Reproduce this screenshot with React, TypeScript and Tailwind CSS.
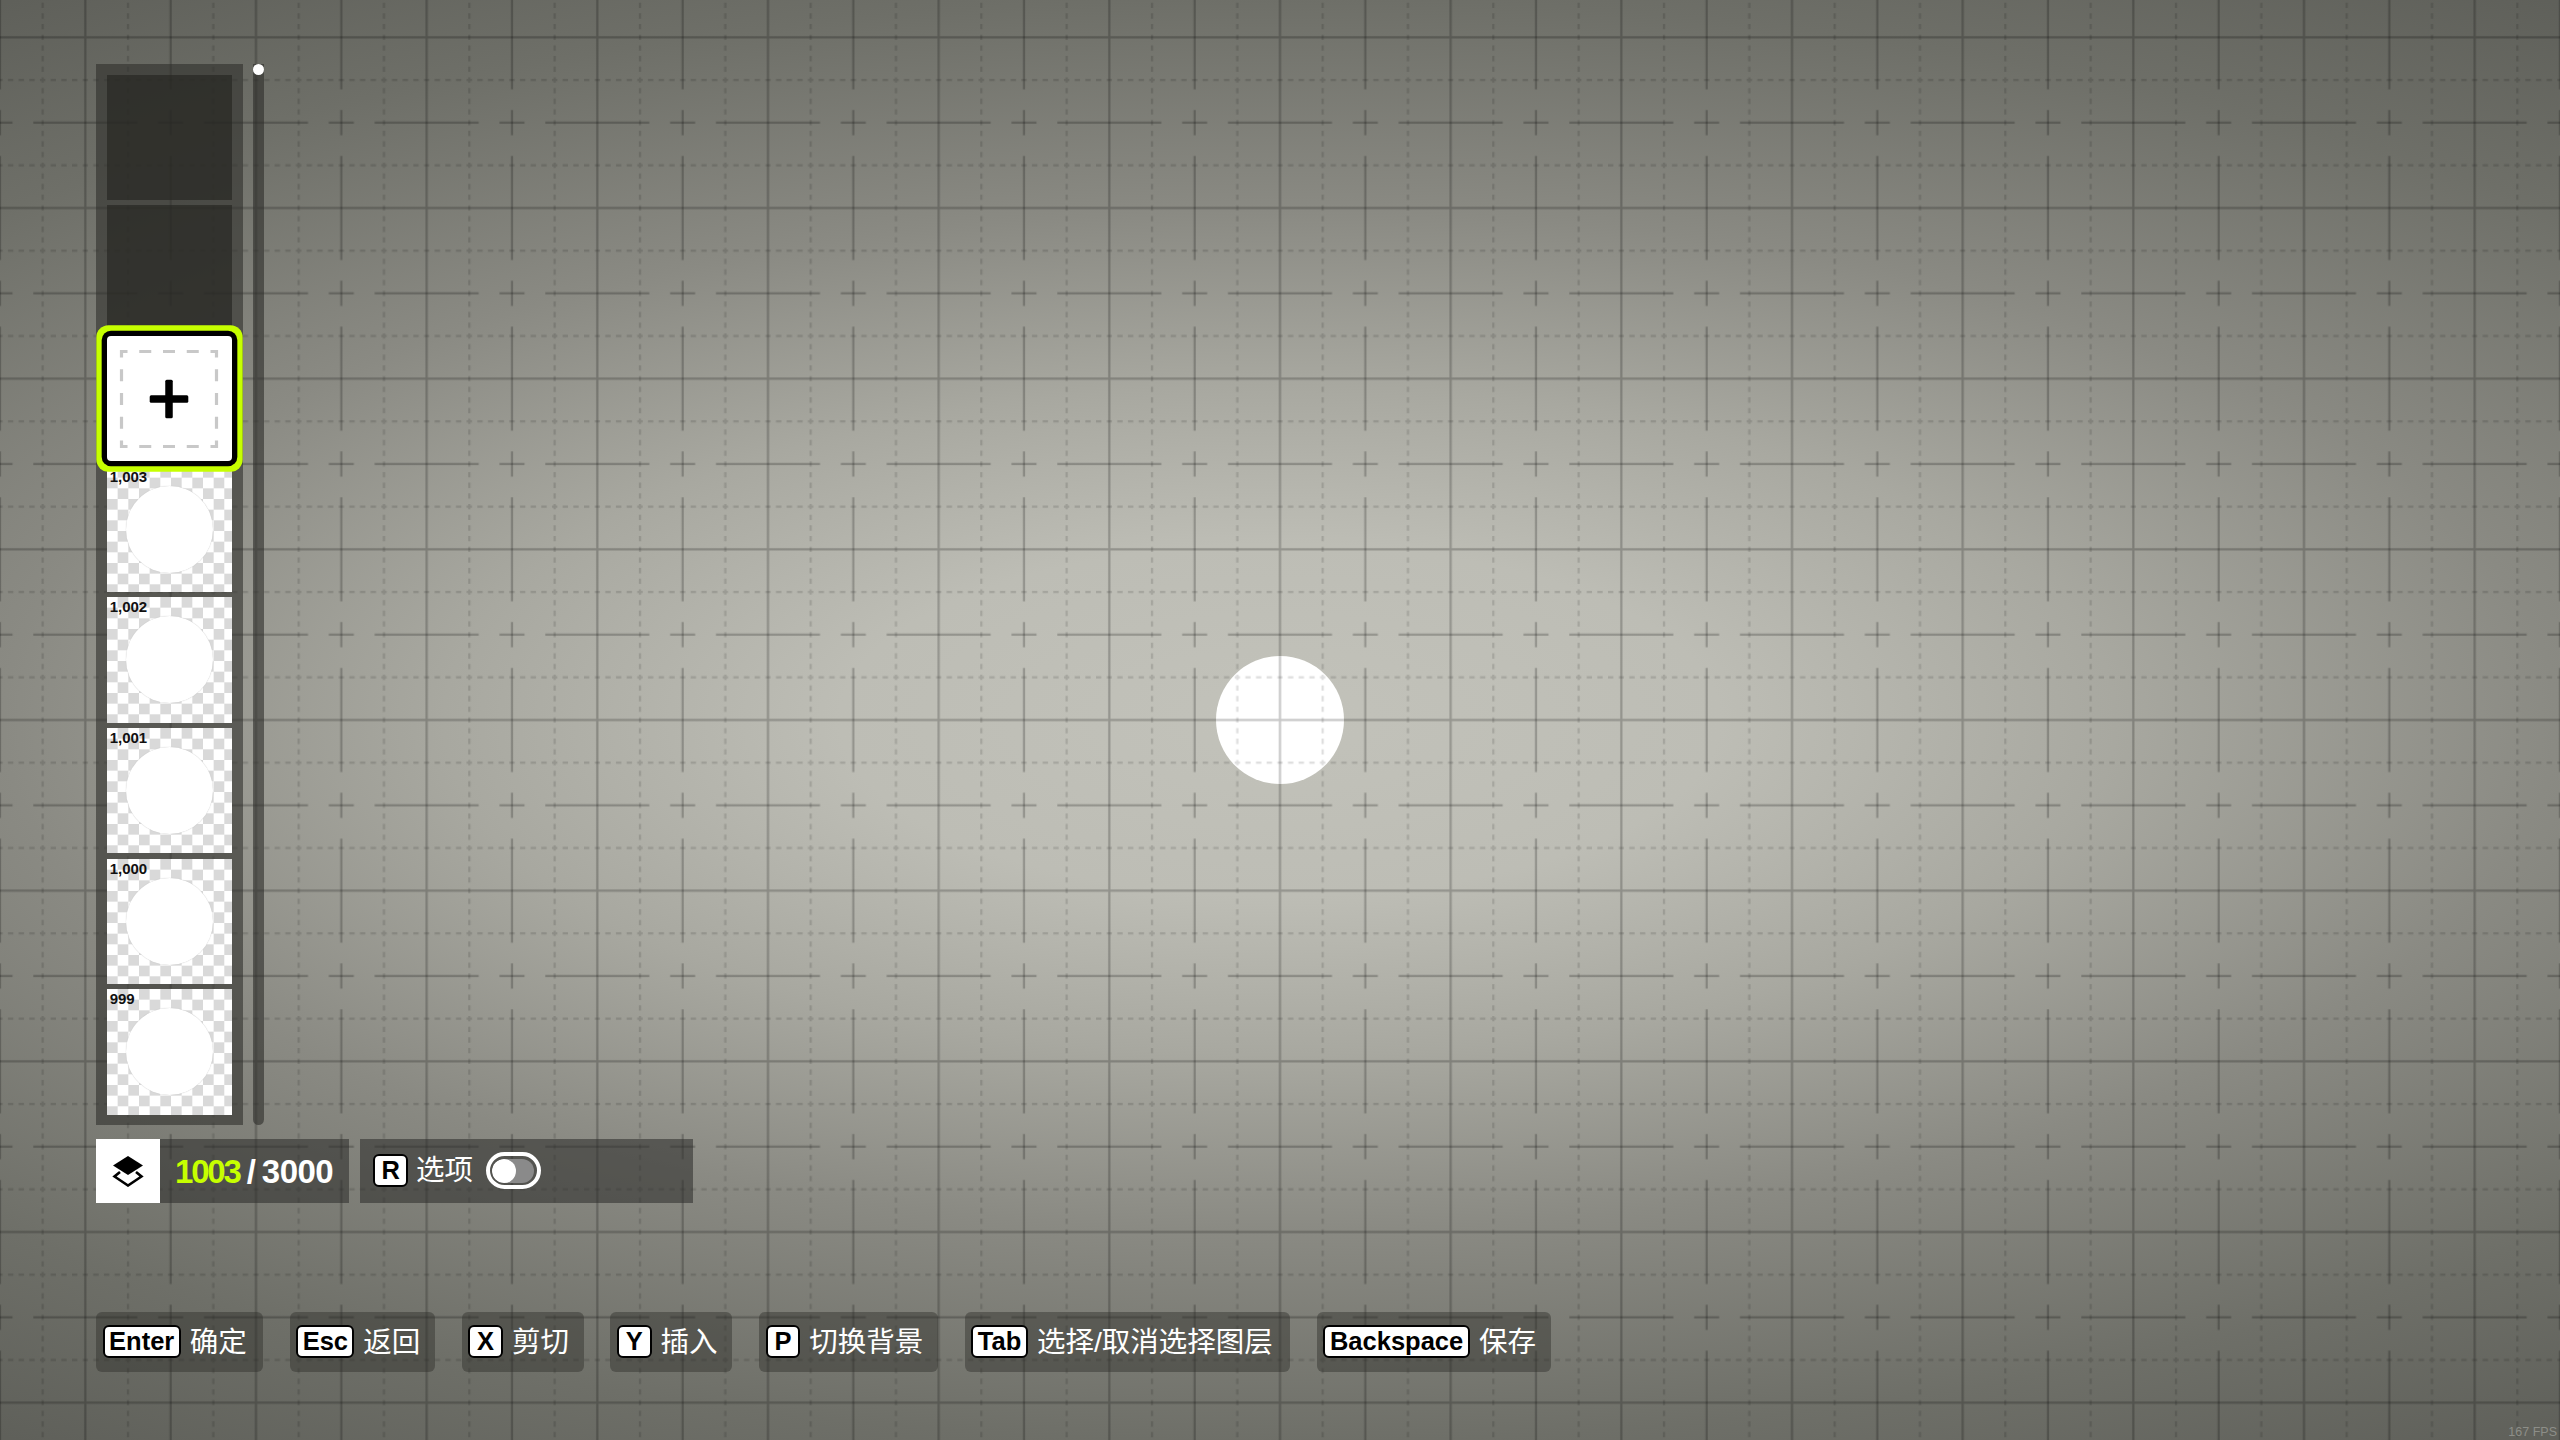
const font = "font-['Liberation_Sans','Noto_Sans_CJK_SC',sans-serif]";

const thumbs = ['1,003', '1,002', '1,001', '1,000', '999'];

const hints = [
  { key: 'Enter', label: '确定', keyW: 'w-[78px]', w: 'w-[167px]', gap: 'mr-[26.67px]' },
  { key: 'Esc', label: '返回', keyW: 'w-[58px]', w: 'w-[145.33px]', gap: 'mr-[26.67px]' },
  { key: 'X', label: '剪切', keyW: 'w-[34.67px]', w: 'w-[122px]', gap: 'mr-[26.67px]' },
  { key: 'Y', label: '插入', keyW: 'w-[34.67px]', w: 'w-[122px]', gap: 'mr-[26.67px]' },
  { key: 'P', label: '切换背景', keyW: 'w-[34.67px]', w: 'w-[179px]', gap: 'mr-[26.67px]' },
  { key: 'Tab', label: '选择/取消选择图层', keyW: 'w-[56.67px]', w: 'w-[325.33px]', gap: 'mr-[26.67px]' },
  { key: 'Backspace', label: '保存', keyW: 'w-[146.67px]', w: 'w-[234.67px]', gap: '' },
];

function GridLines() {
  return (
    <svg className="absolute inset-0 h-full w-full blur-[0.5px]" width="2560" height="1440">
      <defs>
        <pattern id="grid" patternUnits="userSpaceOnUse" x="64" y="16" width="170.667" height="170.667">
          <g stroke="#000" strokeOpacity="0.22" strokeWidth="2.2" fill="none">
            <path d="M21.33 0V170.667M0 21.33H170.667" />
            <path d="M106.67 0V73.33M106.67 140V170.667M106.67 94.17V119.17" />
            <path d="M0 106.67H73.33M140 106.67H170.667M94.17 106.67H119.17" />
          </g>
          <g stroke="#000" strokeOpacity="0.13" strokeWidth="2.2" fill="none" strokeDasharray="5.333 5.334" strokeDashoffset="2.667">
            <path d="M64 0V170.667M149.33 0V170.667M0 64H170.667M0 149.33H170.667" />
          </g>
        </pattern>
      </defs>
      <rect width="2560" height="1440" fill="url(#grid)" />
    </svg>
  );
}

function Key({ children, width }: { children: string; width: string }) {
  return (
    <span className={`flex h-[33px] ${width} items-center justify-center rounded-[6px] border-[2.67px] border-black bg-white text-[25.5px] leading-none font-bold text-black`}>
      {children}
    </span>
  );
}

function AddTile() {
  return (
    <div className="relative z-10 flex h-[125.33px] w-[125.33px] items-center justify-center rounded-[4px] bg-white shadow-[0_0_0_5.33px_#000,0_0_0_10.67px_#c6ff00]">
      <svg width="104" height="104" viewBox="0 0 104 104" fill="none">
        <rect x="4.5" y="4.5" width="95" height="95" stroke="#c8c8c8" strokeWidth="3.2" strokeDasharray="12 11.75" strokeDashoffset="6" />
        <rect x="32.7" y="48.25" width="38.6" height="7.5" rx="1.5" fill="#000" />
        <rect x="48.25" y="32.7" width="7.5" height="38.6" rx="1.5" fill="#000" />
      </svg>
    </div>
  );
}

function Thumb({ label }: { label: string }) {
  return (
    <div className="relative flex h-[125.33px] w-[125.33px] items-center justify-center bg-[conic-gradient(#d9d9d9_25%,#fff_0_50%,#d9d9d9_0_75%,#fff_0)] bg-[length:21.33px_21.33px]">
      <div className="h-[87px] w-[87px] rounded-full bg-white shadow-[0_0_1px_#bbb]" />
      <span className="absolute top-[1px] left-[3px] text-[15px] leading-[18px] font-bold text-[#111]">{label}</span>
    </div>
  );
}

export default function App() {
  return (
    <div className={`relative h-[1440px] w-[2560px] overflow-hidden bg-[radial-gradient(ellipse_2200px_880px_at_50%_50%,#c2c2ba_0%,#bdbdb5_20%,#a8a8a0_38%,#8a8a83_58%,#6e6f68_82%,#5f605a_100%)] ${font}`}>
      <div className="absolute top-[656px] left-[1216px] h-[128px] w-[128px] rounded-full bg-white" />
      <GridLines />
      <div className="relative flex flex-col pt-[64px] pl-[96px]">
        <div className="flex gap-[10.67px]">
          <div className="flex w-[146.67px] flex-col gap-[5.33px] bg-[rgba(45,45,42,0.58)] p-[10.67px]">
            <div className="h-[125.33px] w-[125.33px] bg-[rgba(38,38,34,0.68)]" />
            <div className="h-[125.33px] w-[125.33px] bg-[rgba(38,38,34,0.68)]" />
            <AddTile />
            {thumbs.map((label) => (
              <Thumb key={label} label={label} />
            ))}
          </div>
          <div className="relative w-[10.67px] rounded-b-full bg-[rgba(45,45,42,0.6)]">
            <div className="absolute top-0 left-0 h-[10.67px] w-[10.67px] rounded-full bg-white" />
          </div>
        </div>

        <div className="mt-[13.33px] flex h-[64px] gap-[10.67px]">
          <div className="flex w-[253.33px] items-center bg-[rgba(45,45,42,0.56)]">
            <div className="flex h-[64px] w-[64px] items-center justify-center bg-white">
              <svg width="32" height="32" viewBox="0 0 32 32">
                <path d="M16 1L31 10.5L16 20L1 10.5Z" fill="#000" />
                <path d="M8 17L2.5 21.5L16 30.5L29.5 21.5L24 17" fill="none" stroke="#000" strokeWidth="2.6" />
              </svg>
            </div>
            <span className="mt-[2px] ml-[15px] text-[33px] leading-none font-bold tracking-[-2.2px] text-[#c6ff00]">1003</span>
            <span className="mt-[2px] mr-[6px] ml-[7px] text-[33px] leading-none font-bold text-white">/</span>
            <span className="mt-[2px] text-[33px] leading-none font-bold tracking-[-0.5px] text-white">3000</span>
          </div>
          <div className="flex w-[333.33px] items-center bg-[rgba(45,45,42,0.56)] pl-[13.33px]">
            <Key width="w-[34.67px]">R</Key>
            <span className="ml-[8px] text-[28.5px] leading-none text-white">选项</span>
            <span className="ml-[13px] flex h-[37px] w-[55px] items-center rounded-full border-[4px] border-white p-[2.5px]">
              <span className="flex h-full w-full overflow-hidden rounded-full bg-[#8a8a8a]">
                <span className="h-full w-[24px] rounded-full bg-white" />
              </span>
            </span>
          </div>
        </div>

        <div className="mt-[109.33px] flex">
          {hints.map((h) => (
            <div key={h.key} className={`flex h-[60px] ${h.w} ${h.gap} items-center rounded-[6px] bg-[rgba(45,45,42,0.44)] pl-[6.67px]`}>
              <Key width={h.keyW}>{h.key}</Key>
              <span className="ml-[9px] text-[28.5px] leading-none whitespace-nowrap text-white">{h.label}</span>
            </div>
          ))}
        </div>
      </div>
      <span className="absolute right-[3px] bottom-[2px] text-[12.5px] leading-none text-[#8d8e88]">167 FPS</span>
    </div>
  );
}
